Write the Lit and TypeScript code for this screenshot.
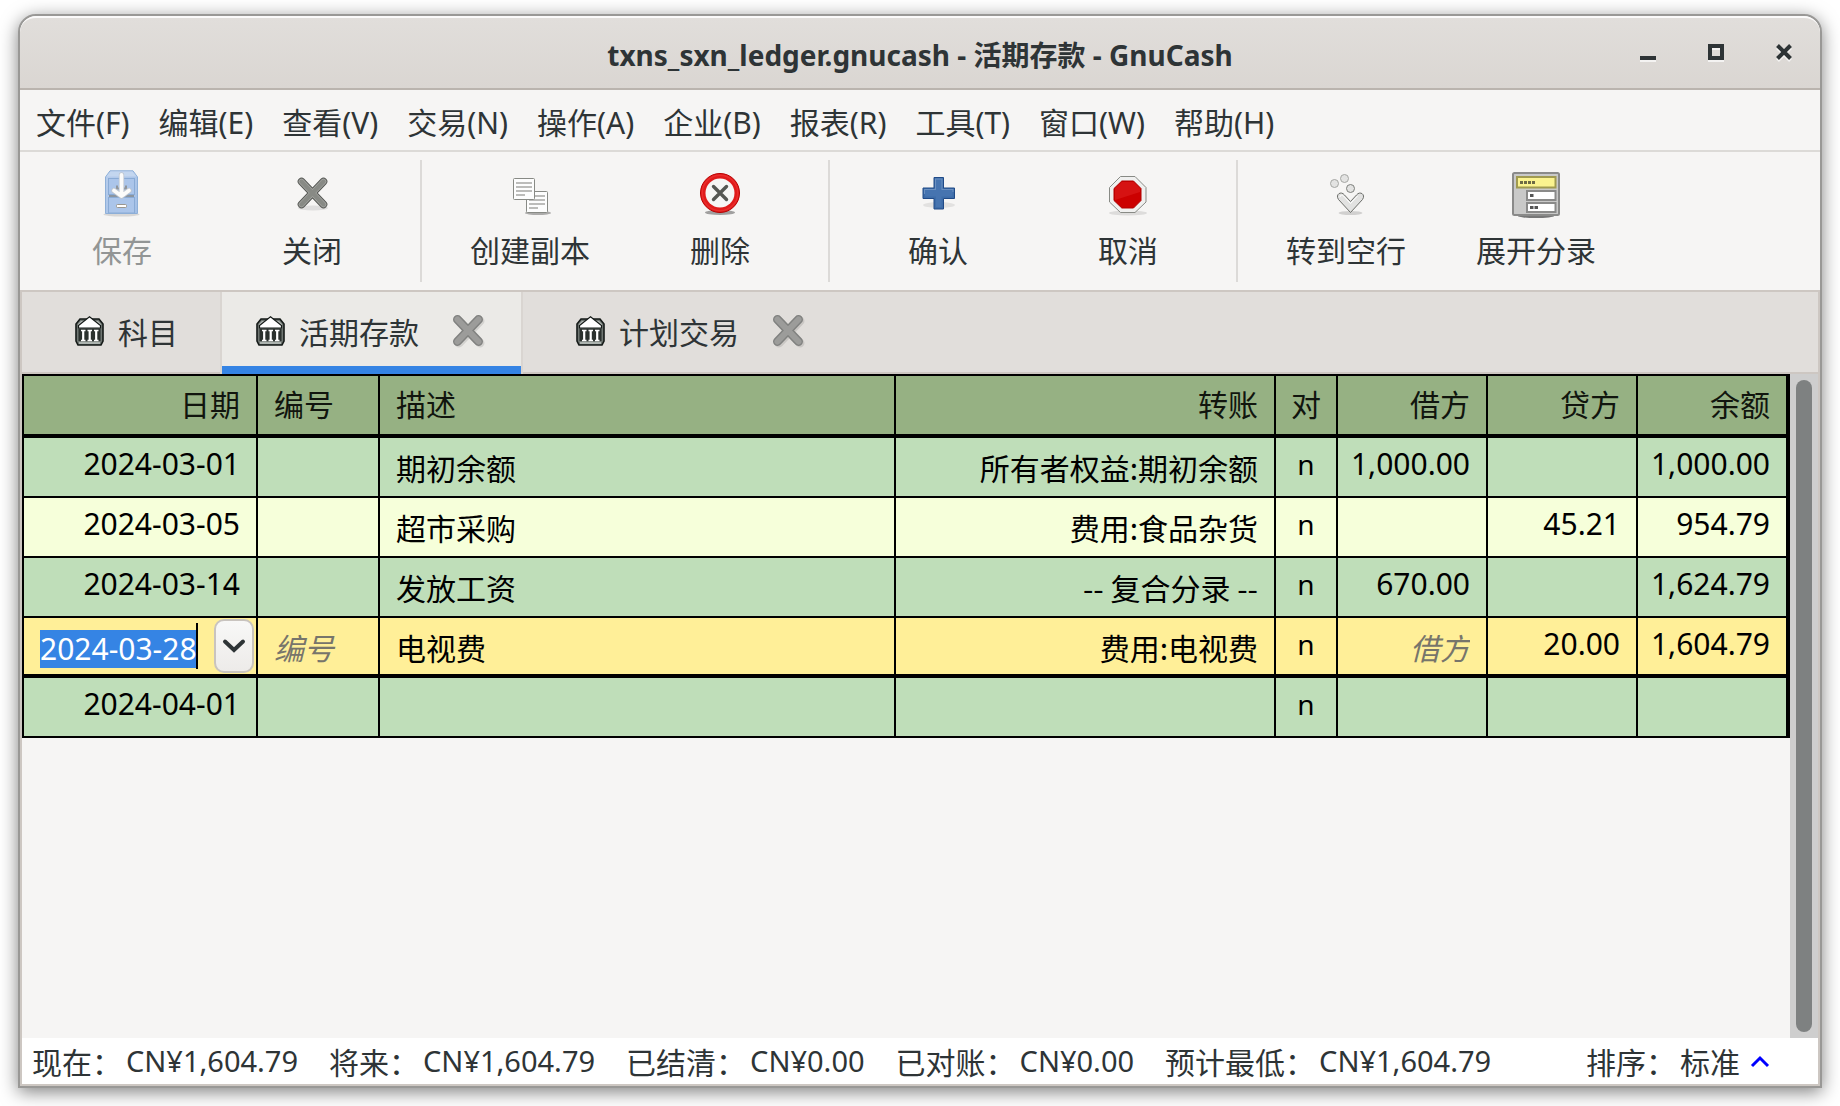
import { LitElement, html, css, svg, nothing } from "lit";
import { customElement, state } from "lit/decorators.js";
import { classMap } from "lit/directives/class-map.js";

const saveIcon = svg`
  <defs><linearGradient id="cab" x1="0" y1="0" x2="1" y2="1">
    <stop offset="0" stop-color="#b7cdec"/><stop offset="1" stop-color="#a3bfe6"/></linearGradient></defs>
  <ellipse cx="24.5" cy="44.5" rx="18" ry="2" fill="#000" opacity=".12"/>
  <path d="M8.5 7 L13 .8 H36 L40.500 7 V43.500 H8.500 Z" fill="url(#cab)" stroke="#8fb0d8"/>
  <path d="M9.500 6.500 L13.500 1.500 H35.500 L39.500 6.500 Z" fill="#c3d6ef"/>
  <rect x="11.500" y="8.500" width="26" height="16" fill="#abc5ea" stroke="#8aabd5"/>
  <rect x="11.500" y="27.500" width="26" height="15.500" fill="#abc5ea" stroke="#8aabd5"/>
  <rect x="12" y="25" width="25" height="2" fill="#8b95a0"/>
  <path d="M20 15.500 V18.500 H29 V15.500" fill="none" stroke="#8f959c" stroke-width="2"/>
  <rect x="19.500" y="34.500" width="10" height="3" rx="1" fill="#fff" stroke="#9a968f"/>
  <path d="M24.500 5 V24 M17 20.500 L24.500 26 L32 20.500" fill="none" stroke="#bfc6cf" stroke-width="5.400" stroke-linecap="round" stroke-linejoin="round"/>
  <path d="M24.500 5 V24 M17 20.500 L24.500 26 L32 20.500" fill="none" stroke="#fbfbfa" stroke-width="3.800" stroke-linecap="round" stroke-linejoin="round"/>`;

const closeIcon = svg`
  <ellipse cx="26" cy="38" rx="15" ry="2.500" fill="#000" opacity=".09"/>
  <path d="M14.500 11.500 L36.500 34.500 M36.500 11.500 L14.500 34.500" stroke="#555753" stroke-width="7.600" stroke-linecap="round"/>
  <path d="M14.500 11.500 L36.500 34.500 M36.500 11.500 L14.500 34.500" stroke="#a3a4a1" stroke-width="5.800" stroke-linecap="round"/>
  <path d="M14.500 11.500 L36.500 34.500 M36.500 11.500 L14.500 34.500" stroke="#888a85" stroke-width="4" stroke-linecap="round"/>`;

const sheet = (x: number, y: number) => svg`
  <rect x=${x + 0.5} y=${y + 0.5} width="21" height="21" rx="1" fill="#fdfdfd" stroke="#888a85"/>
  <path d="M${x + 3} ${y + 5} h16 M${x + 3} ${y + 9} h16 M${x + 3} ${y + 13} h16 M${x + 3} ${y + 17} h9" stroke="#bcbcba" stroke-width="2"/>`;
const copyIcon = svg`
  <ellipse cx="33" cy="43" rx="13" ry="2" fill="#000" opacity=".3"/>
  ${sheet(21, 21)}${sheet(8, 8)}`;

const deleteIcon = svg`
  <ellipse cx="25" cy="42.500" rx="15" ry="2.500" fill="#000" opacity=".35"/>
  <circle cx="25" cy="23" r="19.500" fill="#e01b1b" stroke="#b80000"/>
  <circle cx="25" cy="23" r="17.800" fill="none" stroke="#ea2c2c" stroke-width="1.500"/>
  <circle cx="25" cy="23" r="14.500" fill="#f6f6f5"/>
  <path d="M18.500 16.500 L31.500 29.500 M31.500 16.500 L18.500 29.500" stroke="#555753" stroke-width="3.400" stroke-linecap="round"/>`;

const plusIcon = svg`
  <ellipse cx="26" cy="35" rx="16" ry="3" fill="#000" opacity=".08"/>
  <path d="M21 7.500 H30.500 V18 H41.500 V28.500 H30.500 V39 H21 V28.500 H10 V18 H21 Z" fill="#3d6ca8" stroke="#204a87" stroke-linejoin="round"/>
  <path d="M22 8.500 H29.500 V19 H40.500 V22 L11 24 V19 H22 Z" fill="#7f9fca" opacity=".7"/>
  <path d="M23 9.500 H28.500 V20 H39.500 V26.500 H28.500 V37 H23 V26.500 H12 V20 H23 Z" fill="#4674b0"/>`;

const stopIcon = svg`
  <ellipse cx="25" cy="43" rx="19" ry="2.500" fill="#000" opacity=".1"/>
  <path d="M17.500 6.500 H32 L43 17.500 V32 L32 42.500 H17.500 L6.500 32 V17.500 Z" fill="#f0f0ef" stroke="#888a85"/>
  <path d="M18.800 11 H30.500 L38 18.500 V30.500 L30.500 38 H18.800 L11 30.500 V18.500 Z" fill="#cc0000" stroke="#b00000"/>
  <path d="M18.800 12 H30.500 L37 18.500 V22 L12 30 V18.500 Z" fill="#da1818" opacity=".75"/>`;

const jumpIcon = svg`
  <ellipse cx="29.500" cy="43" rx="12" ry="2" fill="#000" opacity=".15"/>
  <g fill="#e3e3e2" stroke="#a5a6a3">
    <circle cx="13.500" cy="13.500" r="4"/><circle cx="23.500" cy="8.500" r="4"/>
    <circle cx="29.500" cy="18.500" r="4" stroke="#7d7f7b"/></g>
  <path d="M29.500 42.500 L17.500 29.500 C14 24.500 20 20.500 23.500 25 L29.500 31.500 L35.500 25 C39 20.500 45 24.500 41.500 29.500 Z" fill="#e2e2e1" stroke="#6c6e6a" stroke-linejoin="round"/>
  <path d="M19 27 C19 25 21 24.500 22.500 26 L29.500 33.500 L36.500 26" fill="none" stroke="#fff"/>`;

const splitIcon = svg`
  <ellipse cx="25" cy="46" rx="18" ry="2" fill="#777"/>
  <rect x="2" y="3" width="46" height="42" rx="1.500" fill="#c9c9c8" stroke="#8a8a89" stroke-width="2"/>
  <rect x="6" y="7" width="38.500" height="10.500" fill="#fbf38f" stroke="#a09a50" stroke-width="2"/>
  <path d="M9 12.500 H24" stroke="#6d6a45" stroke-width="3" stroke-dasharray="3 1"/>
  <rect x="16" y="21" width="28.500" height="9" fill="#fff" stroke="#8a8a89" stroke-width="2"/>
  <rect x="16" y="33" width="28.500" height="9" fill="#fff" stroke="#8a8a89" stroke-width="2"/>
  <path d="M19 25.500 h3.500 M19 37.500 h3.500 M23.500 37.500 h3.500" stroke="#555" stroke-width="3"/>`;

const bankIcon = svg`
  <path d="M5 3 H24 L28 8 V25 L26 29 H3 L1 25 V8 Z" fill="#6f7672" stroke="#151a18" stroke-width="1.600"/>
  <path d="M3 8 L6 5 H23 L26 8 V12 H3 Z" fill="#b4bab6"/>
  <path d="M14.500 .8 L25.500 9.500 V12 H3.500 V9.500 Z" fill="#fff" stroke="#151a18" stroke-width="1.200"/>
  <rect x="3.500" y="12.500" width="22" height="12.500" fill="#2b312e"/>
  <path d="M6 14.500 H10.500 M12.500 14.500 H17 M19 14.500 H23.500 M6 24.500 H10.500 M12.500 24.500 H17 M19 24.500 H23.500" stroke="#fff" stroke-width="1.600"/>
  <path d="M8.200 14 V25 M14.700 14 V25 M21.200 14 V25" stroke="#fff" stroke-width="2.200"/>
  <path d="M4 27 H25" stroke="#b4bab6" stroke-width="1.800"/>`;

const tabCloseIcon = svg`
  <path d="M8 8 L29 30 M29 8 L8 30" stroke="#000" opacity=".1" stroke-width="9" stroke-linecap="round"/>
  <path d="M6.500 6.500 L27.500 28.500 M27.500 6.500 L6.500 28.500" stroke="#818280" stroke-width="9" stroke-linecap="round"/>
  <path d="M6.500 6.500 L27.500 28.500 M27.500 6.500 L6.500 28.500" stroke="#9c9c9a" stroke-width="6" stroke-linecap="round"/>`;

interface Tool { label: string; icon: unknown; disabled?: boolean; }
interface Entry {
  date: string; description?: string; transfer?: string;
  debit?: string; credit?: string; balance?: string;
}

const MENUS = ["文件(F)", "编辑(E)", "查看(V)", "交易(N)", "操作(A)", "企业(B)", "报表(R)", "工具(T)", "窗口(W)", "帮助(H)"];

const TOOLS: Tool[][] = [
  [{ label: "保存", icon: saveIcon, disabled: true }, { label: "关闭", icon: closeIcon }],
  [{ label: "创建副本", icon: copyIcon }, { label: "删除", icon: deleteIcon }],
  [{ label: "确认", icon: plusIcon }, { label: "取消", icon: stopIcon }],
  [{ label: "转到空行", icon: jumpIcon }, { label: "展开分录", icon: splitIcon }],
];

const ENTRIES: Entry[] = [
  { date: "2024-03-01", description: "期初余额", transfer: "所有者权益:期初余额", debit: "1,000.00", balance: "1,000.00" },
  { date: "2024-03-05", description: "超市采购", transfer: "费用:食品杂货", credit: "45.21", balance: "954.79" },
  { date: "2024-03-14", description: "发放工资", transfer: "-- 复合分录 --", debit: "670.00", balance: "1,624.79" },
  { date: "2024-03-28", description: "电视费", transfer: "费用:电视费", credit: "20.00", balance: "1,604.79" },
  { date: "2024-04-01" },
];

const TOTALS: [string, string][] = [
  ["现在：", "CN¥1,604.79"], ["将来：", "CN¥1,604.79"], ["已结清：", "CN¥0.00"],
  ["已对账：", "CN¥0.00"], ["预计最低：", "CN¥1,604.79"],
];

@customElement("app-root")
export class AppRoot extends LitElement {
  @state() private current = 3;
  @state() private tab = 1;

  static styles = css`
    :host {
      display: flex;
      box-sizing: border-box;
      min-height: 100vh;
      padding: 14px 18px 18px;
      background: #fff;
      color: #2e3436;
      font: 30px/40px "Noto Sans CJK SC", sans-serif;
    }
    *, *::before { box-sizing: border-box; }
    button, input { font: inherit; color: inherit; border: 0; margin: 0; padding: 0; background: none; }
    svg { display: block; fill: none; }
    .window {
      flex: 1;
      min-width: 0;
      display: flex;
      flex-direction: column;
      border: 2px solid #999896;
      border-radius: 18px 18px 0 0;
      background: #f6f5f4;
      box-shadow: 0 4px 18px rgba(0, 0, 0, 0.5);
      overflow: hidden;
    }
    .titlebar {
      display: grid;
      grid-template-columns: 1fr auto 1fr;
      align-items: center;
      height: 74px;
      border-top: 2px solid #fbfafa;
      border-bottom: 2px solid #bab4ae;
      border-radius: 16px 16px 0 0;
      background: linear-gradient(#e1dedb, #dad6d2);
    }
    .title {
      grid-column: 2;
      margin: 0;
      padding-top: 4px;
      font: bold 28px/40px "Noto Sans", "Noto Sans CJK SC", sans-serif;
    }
    .controls { display: flex; justify-content: flex-end; gap: 36px; padding: 0 20px 2px 0; }
    .controls button { width: 32px; height: 32px; display: grid; place-items: center; filter: drop-shadow(0 2px 0 #f4f3f2); }
    .menubar {
      display: flex;
      gap: 29px;
      height: 62px;
      padding: 15px 16px 9px;
      border-bottom: 2px solid #dcdad7;
      font-family: "Noto Sans", "Noto Sans CJK SC", sans-serif;
    }
    .menubar button { line-height: 36px; white-space: nowrap; }
    .toolbar { display: flex; height: 140px; padding: 0 7px; border-bottom: 2px solid #cdc7c2; }
    .group { display: flex; }
    .group + .group::before {
      content: "";
      width: 2px;
      height: 122px;
      margin: 8px 13px 0;
      background: #dcdad8;
    }
    .tool { width: 190px; padding-top: 18px; display: flex; flex-direction: column; align-items: center; gap: 11px; }
    .tool:disabled { color: #929595; }
    .notebook { flex: 1; display: flex; flex-direction: column; border: solid #cdc7c2; border-width: 0 2px 2px; }
    .tabs { display: flex; height: 82px; background: #e1dedb; border-bottom: 2px solid #cdc7c2; }
    .tab {
      display: flex;
      align-items: center;
      height: 82px;
      padding: 0 34px 4px 53px;
      border-right: 2px solid #d9d5d1;
    }
    .tab:last-child { border-right: 0; }
    .tab.fixed { padding-right: 42px; }
    .tab.active { padding-left: 34px; background: #ebeae7; box-shadow: inset 0 -8px #3584e4; }
    .tab .name { display: flex; align-items: center; gap: 14px; }
    .tab .shut { margin-left: 32px; }
    .page { flex: 1; display: flex; }
    .sheet { flex: 1; min-width: 0; }
    table {
      width: 100%;
      table-layout: fixed;
      border-collapse: separate;
      border-spacing: 0;
      border: solid #000;
      border-width: 2px 0 0 2px;
      color: #000;
    }
    .c-date { width: 234px; }
    .c-num { width: 122px; }
    .c-transfer { width: 380px; }
    .c-flag { width: 62px; }
    .c-amount { width: 150px; }
    .c-balance { width: 152px; }
    th, td { padding: 0 14px 0 16px; border: solid #000; border-width: 0 2px 2px 0; text-align: left; vertical-align: top; white-space: nowrap; overflow: hidden; }
    th:last-child, td:last-child { border-right-width: 4px; }
    th { height: 62px; padding-top: 7px; border-bottom-width: 4px; background: #96b183; color: #11150e; font-weight: 400; }
    td { height: 60px; padding-top: 9px; background: #bfdeb9; }
    tr.alt td { background: #f6ffda; }
    tr.current td { background: #ffef98; border-bottom-width: 4px; }
    tr .right { text-align: right; padding: 7px 16px 0 0; }
    tr td.right { padding-top: 9px; }
    tr .flag { text-align: center; padding-left: 0; padding-right: 0; }
    td.latin, tr td.latin.right { font-family: "Noto Sans", sans-serif; padding-top: 6px; }
    td.latin.flag { font-size: 28px; }
    td input { display: block; width: 100%; height: 40px; }
    td input::placeholder { color: #77756b; font-style: italic; opacity: 1; }
    td.right input { text-align: right; }
    tr td.editing { padding: 0 2px 0 16px; }
    .edit { display: flex; align-items: center; height: 56px; }
    .edit input { width: 156px; height: 38px; margin-top: 6px; background: #3584e4; color: #fff; font-family: "Noto Sans", sans-serif; }
    .caret { width: 2px; height: 46px; background: #000; }
    .drop {
      display: grid;
      place-items: center;
      width: 40px;
      height: 54px;
      margin-left: auto;
      border: 2px solid #c9c4bf;
      border-radius: 10px;
      background: linear-gradient(#f8f8f7, #edebe9);
    }
    .scrollbar { width: 28px; padding: 6px; display: flex; background: #cecece; }
    .thumb { flex: 1; border-radius: 8px; background: #7e8181; }
    .status { display: flex; justify-content: space-between; height: 46px; padding: 3px 48px 3px 10px; background: #fff; }
    .totals { display: flex; gap: 31px; margin: 0; }
    .totals div { display: flex; gap: 4px; }
    .totals dd { margin: 0; font: 29px/40px "Noto Sans", "Noto Sans CJK SC", sans-serif; }
    .sort { display: flex; align-items: center; gap: 10px; }
    .sort .order { display: flex; gap: 4px; }
  `;

  private cell(value: string | undefined) {
    return html`<td class="latin right">${value ?? nothing}</td>`;
  }

  private row(e: Entry, i: number) {
    const on = i === this.current;
    return html`
      <tr class=${classMap({ current: on, alt: i === 1 })} @click=${() => (this.current = i)}>
        ${on
          ? html`<td class="editing"><div class="edit">
              <input aria-label="日期" .value=${e.date} /><span class="caret"></span>
              <button class="drop" aria-label="选择日期">
                <svg width="24" height="16" viewBox="0 0 24 16"><path d="M3 3.500 L12 12 L21 3.500" stroke="#2e3436" stroke-width="4" stroke-linecap="round"/></svg>
              </button></div></td>
            <td><input aria-label="编号" placeholder="编号" /></td>`
          : html`${this.cell(e.date)}<td></td>`}
        <td>${e.description ?? nothing}</td>
        <td class="right">${e.transfer ?? nothing}</td>
        <td class="latin flag">n</td>
        ${on && !e.debit
          ? html`<td class="right"><input aria-label="借方" placeholder="借方" /></td>`
          : this.cell(e.debit)}
        ${this.cell(e.credit)}${this.cell(e.balance)}
      </tr>`;
  }

  private tabItem(i: number, name: string, closable: boolean) {
    return html`<div class=${classMap({ tab: true, active: this.tab === i, fixed: !closable })}>
      <button class="name" role="tab" aria-selected=${this.tab === i} @click=${() => (this.tab = i)}>
        <svg width="29" height="30" viewBox="0 0 29 30">${bankIcon}</svg><span>${name}</span>
      </button>
      ${closable
        ? html`<button class="shut" aria-label="关闭${name}"><svg width="36" height="36" viewBox="0 0 36 36">${tabCloseIcon}</svg></button>`
        : nothing}
    </div>`;
  }

  render() {
    return html`
      <main class="window">
        <header class="titlebar">
          <h1 class="title">txns_sxn_ledger.gnucash - 活期存款 - GnuCash</h1>
          <div class="controls">
            <button aria-label="最小化"><svg width="16" height="16"><path d="M0 14 H16" stroke="#2e3436" stroke-width="4"/></svg></button>
            <button aria-label="最大化"><svg width="16" height="16"><rect x="2" y="2" width="12" height="12" stroke="#2e3436" stroke-width="4"/></svg></button>
            <button aria-label="关闭"><svg width="16" height="16"><path d="M1.500 1.500 L14.500 14.500 M14.500 1.500 L1.500 14.500" stroke="#2e3436" stroke-width="4"/></svg></button>
          </div>
        </header>
        <nav class="menubar">${MENUS.map((m) => html`<button>${m}</button>`)}</nav>
        <div class="toolbar">
          ${TOOLS.map((g) => html`<div class="group">${g.map((t) => html`
            <button class="tool" ?disabled=${t.disabled ?? false}>
              <svg width="50" height="48" viewBox="0 0 50 48">${t.icon}</svg><span>${t.label}</span>
            </button>`)}</div>`)}
        </div>
        <section class="notebook">
          <div class="tabs" role="tablist">
            ${this.tabItem(0, "科目", false)}${this.tabItem(1, "活期存款", true)}${this.tabItem(2, "计划交易", true)}
          </div>
          <div class="page">
            <div class="sheet">
              <table>
                <colgroup>
                  <col class="c-date" /><col class="c-num" /><col /><col class="c-transfer" /><col class="c-flag" />
                  <col class="c-amount" /><col class="c-amount" /><col class="c-balance" />
                </colgroup>
                <thead><tr>
                  <th class="right">日期</th><th>编号</th><th>描述</th><th class="right">转账</th><th class="flag">对</th>
                  <th class="right">借方</th><th class="right">贷方</th><th class="right">余额</th>
                </tr></thead>
                <tbody>${ENTRIES.map((e, i) => this.row(e, i))}</tbody>
              </table>
            </div>
            <div class="scrollbar"><div class="thumb"></div></div>
          </div>
          <footer class="status">
            <dl class="totals">${TOTALS.map(([k, v]) => html`<div><dt>${k}</dt><dd>${v}</dd></div>`)}</dl>
            <button class="sort"><span class="order"><span>排序：</span><span>标准</span></span>
              <svg width="20" height="14" viewBox="0 0 20 14"><path d="M2 12 L10 4 L18 12" stroke="#0000ff" stroke-width="3"/></svg>
            </button>
          </footer>
        </section>
      </main>`;
  }
}
